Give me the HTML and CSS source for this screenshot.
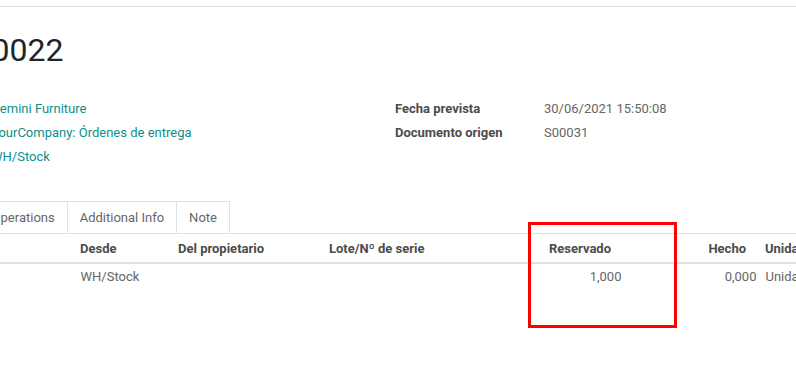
FILE: index.html
```html
<!DOCTYPE html>
<html lang="es">

<head>
    <meta charset="UTF-8">
    <meta name="viewport" content="width=device-width, initial-scale=1.0">
    <title>WH/OUT/00022</title>
    <link rel="stylesheet" href="styles.css">
</head>

<body>
    <div class="control-panel"></div>

    <div class="sheet">
        <h1 class="title">WH/OUT/00022</h1>

        <div class="groups">
            <table class="group group-left">
                <tr>
                    <td class="label">Contacto</td>
                    <td><a href="#">Gemini Furniture</a></td>
                </tr>
                <tr>
                    <td class="label">Tipo de operación</td>
                    <td><a href="#">YourCompany: Órdenes de entrega</a></td>
                </tr>
                <tr>
                    <td class="label">Ubicación de origen</td>
                    <td><a href="#">WH/Stock</a></td>
                </tr>
            </table>
            <table class="group group-right">
                <tr>
                    <td class="label">Fecha prevista</td>
                    <td class="value">30/06/2021 15:50:08</td>
                </tr>
                <tr>
                    <td class="label">Documento origen</td>
                    <td class="value">S00031</td>
                </tr>
            </table>
        </div>

        <div class="notebook">
            <ul class="tabs">
                <li class="active">Detailed Operations</li>
                <li>Operations</li>
                <li>Additional Info</li>
                <li>Note</li>
            </ul>

            <table class="lines">
                <colgroup>
                    <col class="col-product">
                    <col class="col-from">
                    <col class="col-owner">
                    <col class="col-lot">
                    <col class="col-qty">
                    <col class="col-qty">
                    <col class="col-uom">
                </colgroup>
                <thead>
                    <tr>
                        <th>Producto</th>
                        <th>Desde</th>
                        <th>Del propietario</th>
                        <th>Lote/Nº de serie</th>
                        <th class="num">Reservado</th>
                        <th class="num">Hecho</th>
                        <th>Unidad de medida</th>
                    </tr>
                </thead>
                <tbody>
                    <tr>
                        <td>Office Chair</td>
                        <td>WH/Stock</td>
                        <td></td>
                        <td></td>
                        <td class="num">1,000</td>
                        <td class="num">0,000</td>
                        <td>Unidades</td>
                    </tr>
                </tbody>
            </table>
        </div>
    </div>

    <!-- recuadro rojo de la captura -->
    <div class="highlight"></div>
</body>

</html>
```

FILE: styles.css
```css
body {
    margin: 0;
    overflow: hidden;
    background: #fff;
    font-family: Roboto, "Liberation Sans", sans-serif;
    font-size: 13px;
    color: #666;
}

.control-panel {
    height: 6px;
    border-bottom: 1px solid #dcdcdc;
}

.sheet {
    margin-left: -159px;
    width: 1120px;
}

.title {
    margin: 24px 0 0 -7px;
    font-size: 32px;
    font-weight: 400;
    line-height: 38px;
    color: #212529;
}

.groups {
    display: grid;
    grid-template-columns: 554px 1fr;
    align-items: start;
    margin-top: 28px;
}

.group {
    border-collapse: collapse;
}

.group td {
    padding: 0;
    height: 24px;
    line-height: 24px;
    white-space: nowrap;
}

.group-left .label {
    width: 150px;
}

.group-right .label {
    width: 149px;
}

.group .label {
    font-weight: bold;
    color: #4c4c4c;
}

.group a {
    color: #0d8f8c;
    text-decoration: none;
}

.notebook {
    margin-top: 32px;
}

.tabs {
    display: flex;
    margin: 0;
    padding: 0;
    list-style: none;
    border-bottom: 1px solid #dee2e6;
}

.tabs li {
    padding: 6px 12px 5px;
    line-height: 20px;
    border: 1px solid #dee2e6;
    border-bottom: none;
    margin-left: -1px;
    color: #666;
    white-space: nowrap;
}

.tabs li.active {
    border-color: transparent;
}

.lines {
    table-layout: fixed;
    width: 1120px;
    border-collapse: collapse;
}

.col-product {
    width: 235px;
}

.col-from {
    width: 98px;
}

.col-owner {
    width: 151px;
}

.col-lot {
    width: 166px;
}

.col-qty {
    width: 135px;
}

.lines th {
    padding: 5px 4px 3px 3px;
    line-height: 20px;
    text-align: left;
    font-weight: bold;
    color: #4c4c4c;
    border-bottom: 2px solid #dee2e6;
    border-left: 1px solid #fff;
    white-space: nowrap;
}

.lines th.num {
    text-align: right;
    padding-right: 15px;
}

.lines td {
    padding: 3px 4px 5px;
    line-height: 20px;
    white-space: nowrap;
    overflow: hidden;
}

.lines td.num {
    text-align: right;
    padding-right: 5px;
}

.highlight {
    position: absolute;
    left: 528px;
    top: 222px;
    width: 143px;
    height: 100px;
    border: 3px solid #f00;
}
```
